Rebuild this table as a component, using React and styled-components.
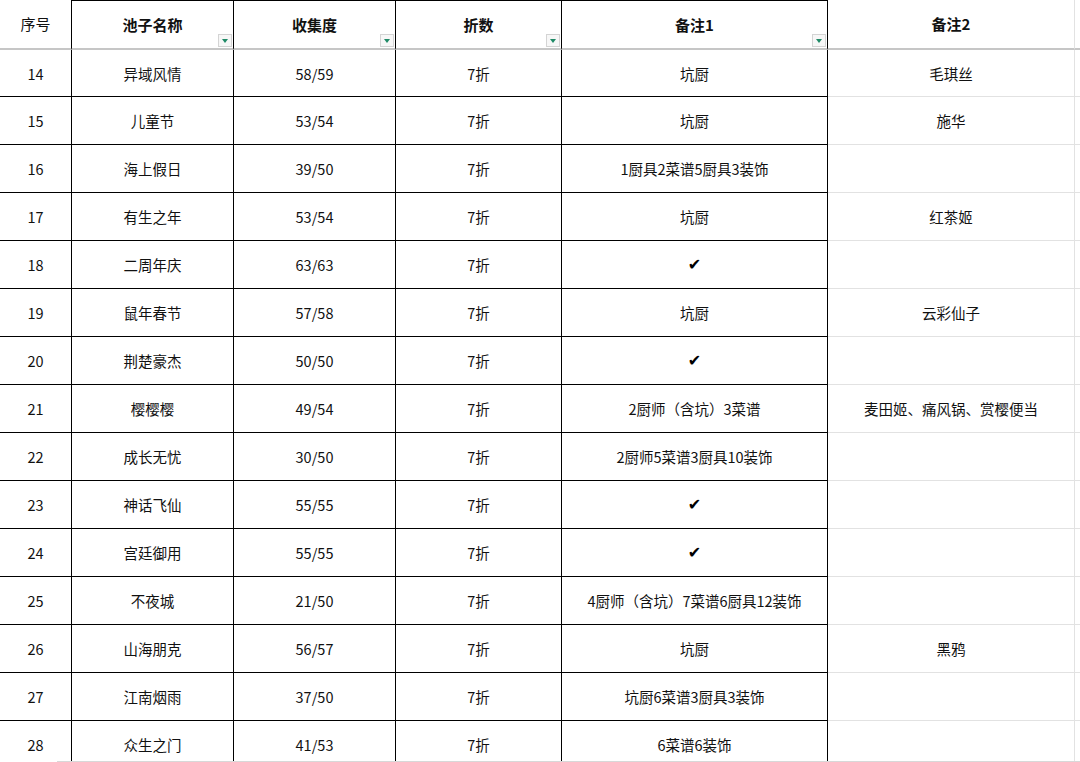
import React from "react";
import styled, { createGlobalStyle } from "styled-components";

const Global = createGlobalStyle`
  html, body { margin: 0; padding: 0; background: #ffffff; }
  body { font-family: "Noto Sans CJK SC", sans-serif; overflow: hidden; }
`;

const Sheet = styled.div`
  display: grid;
  grid-template-columns: 72px 162px 162px 166px 266px 247px 1fr;
  grid-auto-rows: 48px;
  grid-template-rows: 50px 47px;
  width: 1080px;
  height: 762px;
  overflow: hidden;
  position: relative;
`;

const Cell = styled.div`
  position: relative;
  display: flex;
  align-items: center;
  justify-content: center;
  box-sizing: border-box;
  font-family: "Noto Sans CJK SC", sans-serif;
  font-size: 14.5px;
  color: #111;
  white-space: nowrap;
  border-right: 1px solid ${(p) => (p.$outer ? "#e2e2e2" : "#000")};
  border-bottom: ${(p) =>
    p.$head ? "2px solid #c6c6c6" : p.$outer ? "1px solid #e2e2e2" : "1px solid #000"};
  border-top: ${(p) => (p.$head && !p.$outer && !p.$first ? "1px solid #000" : "none")};
  font-weight: ${(p) => (p.$bold ? 700 : 400)};
  ${(p) => (p.$head ? "font-size: 15px; padding-bottom: 1px;" : "")}
`;

const Edge = styled.div`
  box-sizing: border-box;
  border-bottom: ${(p) => (p.$head ? "2px solid #c6c6c6" : "1px solid #e2e2e2")};
`;

const FilterBtn = styled.span`
  position: absolute;
  right: 1px;
  bottom: 1px;
  width: 14px;
  height: 13px;
  box-sizing: border-box;
  border: 1px solid #d4d4d4;
  background: #f7f7f7;
  display: flex;
  align-items: center;
  justify-content: center;
`;

const Tri = styled.span`
  width: 0;
  height: 0;
  border-left: 3.5px solid transparent;
  border-right: 3.5px solid transparent;
  border-top: 4px solid #1f8a66;
  margin-top: 1px;
`;

const Check = styled.span`
  font-family: "DejaVu Sans", sans-serif;
  font-size: 16px;
  color: #000;
`;

const BottomLine = styled.div`
  position: absolute;
  left: 57px;
  right: 0;
  bottom: 0;
  height: 1px;
  background: #d8d8d8;
`;

const rows = [
  [14, "异域风情", "58/59", "7折", "坑厨", "毛琪丝"],
  [15, "儿童节", "53/54", "7折", "坑厨", "施华"],
  [16, "海上假日", "39/50", "7折", "1厨具2菜谱5厨具3装饰", ""],
  [17, "有生之年", "53/54", "7折", "坑厨", "红茶姬"],
  [18, "二周年庆", "63/63", "7折", "✔", ""],
  [19, "鼠年春节", "57/58", "7折", "坑厨", "云彩仙子"],
  [20, "荆楚豪杰", "50/50", "7折", "✔", ""],
  [21, "樱樱樱", "49/54", "7折", "2厨师（含坑）3菜谱", "麦田姬、痛风锅、赏樱便当"],
  [22, "成长无忧", "30/50", "7折", "2厨师5菜谱3厨具10装饰", ""],
  [23, "神话飞仙", "55/55", "7折", "✔", ""],
  [24, "宫廷御用", "55/55", "7折", "✔", ""],
  [25, "不夜城", "21/50", "7折", "4厨师（含坑）7菜谱6厨具12装饰", ""],
  [26, "山海朋克", "56/57", "7折", "坑厨", "黑鸦"],
  [27, "江南烟雨", "37/50", "7折", "坑厨6菜谱3厨具3装饰", ""],
  [28, "众生之门", "41/53", "7折", "6菜谱6装饰", ""],
];

const headers = [
  { t: "序号", bold: false, filter: false },
  { t: "池子名称", bold: true, filter: true },
  { t: "收集度", bold: true, filter: true },
  { t: "折数", bold: true, filter: true },
  { t: "备注1", bold: true, filter: true },
  { t: "备注2", bold: true, filter: false, outer: true },
];

export default function App() {
  return (
    <>
      <Global />
      <Sheet>
        {headers.map((h, i) => (
          <Cell key={"h" + i} $head $bold={h.bold} $outer={h.outer} $first={i === 0}>
            {h.t}
            {h.filter && (
              <FilterBtn>
                <Tri />
              </FilterBtn>
            )}
          </Cell>
        ))}
        <Edge $head />
        {rows.map((r) => (
          <React.Fragment key={r[0]}>
            <Cell>{r[0]}</Cell>
            <Cell>{r[1]}</Cell>
            <Cell>{r[2]}</Cell>
            <Cell>{r[3]}</Cell>
            <Cell>{r[4] === "✔" ? <Check>✔</Check> : r[4]}</Cell>
            <Cell $outer>{r[5]}</Cell>
            <Edge />
          </React.Fragment>
        ))}
        <BottomLine />
      </Sheet>
    </>
  );
}
